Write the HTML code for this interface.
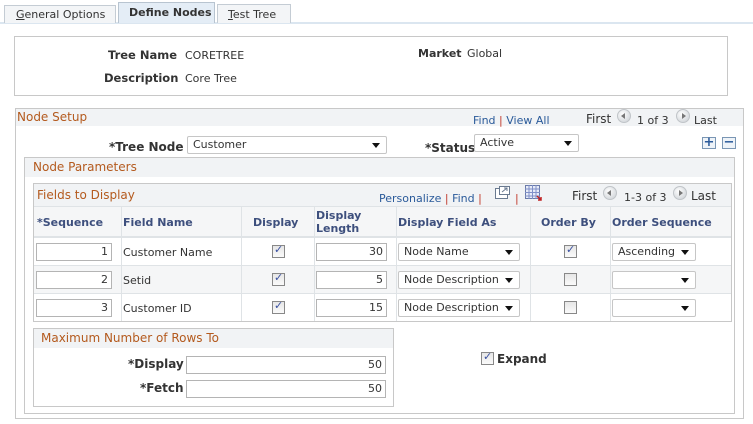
<!DOCTYPE html>
<html><head><style>
*{box-sizing:border-box;margin:0;padding:0}
body{width:753px;height:424px;background:#fff;position:relative;overflow:hidden;font-family:"DejaVu Sans","Liberation Sans",sans-serif;font-size:11px;color:#333}
.a{position:absolute;white-space:nowrap;line-height:13px}
.b{font-weight:bold}
.lnk{color:#2a5a9a}
.sep{color:#c0392b}
.ttl{color:#b45a1e;font-size:12px}
.box{position:absolute;border:1px solid #c8c8c8}
.bar{position:absolute;background:#f1f3f5}
.inp{position:absolute;border:1px solid #b4b4b4;background:#fff;height:18px;text-align:right;padding-right:3px;line-height:16px}
.sel{position:absolute;border:1px solid #c6c6c6;border-radius:2px;background:#fff;height:18px;padding-left:5px;line-height:16px}
.sel:after{content:"";position:absolute;right:6px;top:6px;border-left:4px solid transparent;border-right:4px solid transparent;border-top:5px solid #111}
.cb{position:absolute;width:13px;height:13px;border:1px solid #888;background:linear-gradient(#e6e6e6,#fafafa)}
.cb.on:after{content:"✓";position:absolute;left:1px;top:-3px;font-size:11px;font-weight:bold;color:#3a50a0}
.hd{position:absolute;color:#3d4f7d;font-weight:bold;font-size:11px;line-height:13px}
.vl{position:absolute;width:1px;background:#dfe3e6}
.hl{position:absolute;height:1px;background:#dfe3e6}
.arr{position:absolute;width:14px;height:14px;border-radius:50%;background:radial-gradient(circle at 40% 35%,#fff,#c8cdd2);border:1px solid #c0c4c8}
.arr.l:after{content:"";position:absolute;left:3px;top:3px;border-top:3px solid transparent;border-bottom:3px solid transparent;border-right:4px solid #777}
.arr.r:after{content:"";position:absolute;left:5px;top:3px;border-top:3px solid transparent;border-bottom:3px solid transparent;border-left:4px solid #777}
</style></head><body>
<!-- tabs -->
<div style="position:absolute;left:0;top:22px;width:753px;height:2px;background:#dbe6f0"></div>
<div style="position:absolute;left:4px;top:5px;width:112px;height:18px;border:1px solid #c4ccd4;border-bottom:none;background:#f3f5f7"></div>
<div class="a" style="left:16px;top:8px;color:#333"><u>G</u>eneral Options</div>
<div style="position:absolute;left:118px;top:2px;width:97px;height:21px;border:1px solid #b8c4d0;border-bottom:none;background:#e4edf6"></div>
<div class="a b" style="left:129px;top:6px;color:#333">Define Nodes</div>
<div style="position:absolute;left:217px;top:4px;width:74px;height:19px;border:1px solid #c4ccd4;border-bottom:none;background:#f3f5f7"></div>
<div class="a" style="left:228px;top:8px"><u>T</u>est Tree</div>
<!-- header box -->
<div class="box" style="left:14px;top:36px;width:714px;height:60px"></div>
<div class="a b" style="left:108px;top:49px;font-size:11.5px">Tree Name</div>
<div class="a" style="left:185px;top:49px">CORETREE</div>
<div class="a b" style="left:104px;top:72px;font-size:11.5px">Description</div>
<div class="a" style="left:185px;top:72px">Core Tree</div>
<div class="a b" style="left:418px;top:47px">Market</div>
<div class="a" style="left:467px;top:47px">Global</div>
<!-- node setup -->
<div class="box" style="left:15px;top:108px;width:729px;height:311px"></div>
<div class="bar" style="left:16px;top:109px;width:727px;height:17px"></div>
<div class="a ttl" style="left:17px;top:111px">Node Setup</div>
<div class="a" style="left:473px;top:114px"><span class="lnk">Find</span> <span class="sep">|</span> <span class="lnk">View All</span></div>
<div class="a" style="left:586px;top:113px;font-size:12px">First</div>
<div class="arr l" style="left:617px;top:109px"></div>
<div class="a" style="left:637px;top:114px">1 of 3</div>
<div class="arr r" style="left:676px;top:109px"></div>
<div class="a" style="left:694px;top:114px">Last</div>
<div class="a b" style="left:109px;top:141px;font-size:12px">*Tree Node</div>
<div class="sel" style="left:187px;top:136px;width:200px">Customer</div>
<div class="a b" style="left:425px;top:142px;font-size:12px">*Status</div>
<div class="sel" style="left:474px;top:134px;width:105px">Active</div>
<div style="position:absolute;left:702px;top:137px;width:14px;height:12px;border:1px solid #7a96b4;background:#eef3f8;color:#2a5a9a;font-weight:bold;font-size:13px;line-height:10px;text-align:center">+</div>
<div style="position:absolute;left:722px;top:137px;width:14px;height:12px;border:1px solid #7a96b4;background:#eef3f8;color:#2a5a9a;font-weight:bold;font-size:13px;line-height:10px;text-align:center">−</div>
<!-- node parameters -->
<div class="box" style="left:24px;top:157px;width:711px;height:257px"></div>
<div class="bar" style="left:25px;top:158px;width:709px;height:19px"></div>
<div class="a ttl" style="left:33px;top:161px">Node Parameters</div>
<!-- grid -->
<div class="box" style="left:33px;top:183px;width:699px;height:139px"></div>
<div class="bar" style="left:34px;top:184px;width:697px;height:22px"></div>
<div class="a ttl" style="left:37px;top:189px">Fields to Display</div>
<div class="a" style="left:379px;top:192px"><span class="lnk">Personalize</span> <span class="sep">|</span> <span class="lnk">Find</span> <span class="sep">|</span></div>
<svg style="position:absolute;left:495px;top:186px" width="16" height="14"><rect x="0.5" y="2.5" width="12" height="10" fill="#fff" stroke="#6a7a90"/><rect x="4.5" y="0.5" width="10" height="8" fill="#fff" stroke="#6a7a90"/><path d="M7 6 L12 2 M9 2 H12 V5" stroke="#6a7a90" fill="none"/></svg>
<div class="a sep" style="left:515px;top:192px">|</div>
<svg style="position:absolute;left:525px;top:185px" width="17" height="16"><rect x="0.5" y="0.5" width="14" height="13" fill="#e8ecf8" stroke="#6a7aa8"/><path d="M0 4 H15 M0 7.5 H15 M0 11 H15 M4 0 V14 M7.5 0 V14 M11 0 V14" stroke="#8090c8"/><path d="M12 11 L16 15 M13 15 H16 V12" stroke="#c02020" fill="none" stroke-width="1.5"/></svg>
<div class="a" style="left:572px;top:190px;font-size:12px">First</div>
<div class="arr l" style="left:603px;top:186px"></div>
<div class="a" style="left:624px;top:191px">1-3 of 3</div>
<div class="arr r" style="left:673px;top:186px"></div>
<div class="a" style="left:691px;top:190px;font-size:12px">Last</div>
<div class="bar" style="left:34px;top:206px;width:697px;height:30px;background:#f5f6f7"></div>
<div class="bar" style="left:34px;top:265px;width:697px;height:28px;background:#f5f6f7"></div>
<div class="hl" style="left:34px;top:206px;width:697px"></div>
<div class="hl" style="left:34px;top:236px;width:697px;height:2px"></div>
<div class="hl" style="left:34px;top:265px;width:697px"></div>
<div class="hl" style="left:34px;top:293px;width:697px"></div>
<div class="vl" style="left:121px;top:206px;height:115px"></div>
<div class="vl" style="left:241px;top:206px;height:115px"></div>
<div class="vl" style="left:314px;top:206px;height:115px"></div>
<div class="vl" style="left:396px;top:206px;height:115px"></div>
<div class="vl" style="left:530px;top:206px;height:115px"></div>
<div class="vl" style="left:610px;top:206px;height:115px"></div>
<div class="hd" style="left:37px;top:216px">*Sequence</div>
<div class="hd" style="left:123px;top:216px">Field Name</div>
<div class="hd" style="left:253px;top:216px">Display</div>
<div class="hd" style="left:316px;top:209px">Display<br>Length</div>
<div class="hd" style="left:398px;top:216px">Display Field As</div>
<div class="hd" style="left:541px;top:216px">Order By</div>
<div class="hd" style="left:612px;top:216px">Order Sequence</div>
<!-- rows -->
<div class="inp" style="left:36px;top:243px;width:76px">1</div>
<div class="a" style="left:123px;top:246px">Customer Name</div>
<div class="cb on" style="left:272px;top:245px"></div>
<div class="inp" style="left:316px;top:243px;width:71px">30</div>
<div class="sel" style="left:398px;top:243px;width:122px">Node Name</div>
<div class="cb on" style="left:564px;top:245px"></div>
<div class="sel" style="left:612px;top:243px;width:84px">Ascending</div>

<div class="inp" style="left:36px;top:271px;width:76px">2</div>
<div class="a" style="left:123px;top:274px">Setid</div>
<div class="cb on" style="left:272px;top:273px"></div>
<div class="inp" style="left:316px;top:271px;width:71px">5</div>
<div class="sel" style="left:398px;top:271px;width:122px">Node Description</div>
<div class="cb" style="left:564px;top:273px"></div>
<div class="sel" style="left:612px;top:271px;width:84px"></div>

<div class="inp" style="left:36px;top:299px;width:76px">3</div>
<div class="a" style="left:123px;top:302px">Customer ID</div>
<div class="cb on" style="left:272px;top:301px"></div>
<div class="inp" style="left:316px;top:299px;width:71px">15</div>
<div class="sel" style="left:398px;top:299px;width:122px">Node Description</div>
<div class="cb" style="left:564px;top:301px"></div>
<div class="sel" style="left:612px;top:299px;width:84px"></div>
<!-- max rows -->
<div class="box" style="left:33px;top:328px;width:361px;height:79px"></div>
<div class="bar" style="left:34px;top:329px;width:359px;height:19px"></div>
<div class="a ttl" style="left:41px;top:332px">Maximum Number of Rows To</div>
<div class="a b" style="left:128px;top:358px;font-size:12px">*Display</div>
<div class="inp" style="left:186px;top:356px;width:200px">50</div>
<div class="a b" style="left:140px;top:382px;font-size:12px">*Fetch</div>
<div class="inp" style="left:186px;top:380px;width:200px">50</div>
<div class="cb on" style="left:481px;top:352px"></div>
<div class="a b" style="left:497px;top:353px;font-size:12px">Expand</div>
</body></html>
